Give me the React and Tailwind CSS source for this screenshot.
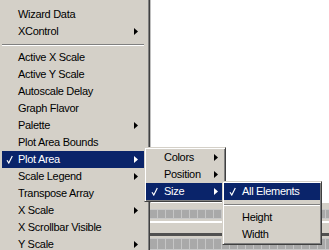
import clsx from "clsx";

const mainItems = [
    { label: "Wizard Data" },
    { label: "XControl", sub: true },
    { sep: true },
    { label: "Active X Scale" },
    { label: "Active Y Scale" },
    { label: "Autoscale Delay" },
    { label: "Graph Flavor" },
    { label: "Palette", sub: true },
    { label: "Plot Area Bounds" },
    { label: "Plot Area", sub: true, checked: true, active: true },
    { label: "Scale Legend", sub: true },
    { label: "Transpose Array" },
    { label: "X Scale", sub: true },
    { label: "X Scrollbar Visible" },
    { label: "Y Scale", sub: true },
];

const plotAreaItems = [
    { label: "Colors", sub: true },
    { label: "Position", sub: true },
    { label: "Size", sub: true, checked: true, active: true },
];

const sizeItems = [
    { label: "All Elements", checked: true, active: true },
    { sep: true },
    { label: "Height" },
    { label: "Width" },
];

function Check({ active }) {
    return (
        <svg width="7" height="9" viewBox="0 0 7 9" className="block">
            <path d="M1 5.2 L2.8 8 L6.3 1" fill="none" stroke={active ? "#fff" : "#000"} strokeWidth="1.2" />
        </svg>
    );
}

function Arrow({ active }) {
    return (
        <svg width="4" height="7" viewBox="0 0 4 7" className="block">
            <polygon points="0,0 4,3.5 0,7" fill={active ? "#fff" : "#000"} />
        </svg>
    );
}

function MenuRow({ item, slot, checkPad }) {
    if (item.sep) {
        return (
            <div className="flex h-[9px] flex-col justify-center">
                <div className="h-[2px] border-t border-b border-t-[#808080] border-b-white" />
            </div>
        );
    }
    return (
        <div
            className={clsx(
                "flex h-[17px] items-center whitespace-nowrap",
                item.active ? "bg-[#0a246a] text-white" : "text-black"
            )}
        >
            <span className={clsx("flex shrink-0", slot, checkPad)}>
                {item.checked && <Check active={item.active} />}
            </span>
            <span className="leading-[17px]">{item.label}</span>
            {item.sub && (
                <span className="ml-auto mr-[6px]">
                    <Arrow active={item.active} />
                </span>
            )}
        </div>
    );
}

function Popup({ className, items }) {
    return (
        <div
            className={clsx(
                "absolute border border-t-[#d4d0c8] border-l-[#d4d0c8] border-r-[#404040] border-b-[#404040] bg-[#d4d0c8] p-[1px] shadow-[inset_1px_1px_0_#ffffff,inset_-1px_-1px_0_#808080]",
                className
            )}
        >
            {items.map((item, i) => (
                <MenuRow key={i} item={item} slot="w-[18px]" checkPad="pl-[5px]" />
            ))}
        </div>
    );
}

function Grid() {
    return (
        <div className="border-y border-y-[#c8c8c8] bg-[repeating-linear-gradient(90deg,#a9a9a9_0_7px,#c6c6c6_7px_8px)]" />
    );
}

export default function App() {
    return (
        <div className="relative h-[250px] w-[329px] overflow-hidden bg-white font-['Liberation_Sans',Arial,sans-serif] text-[11px] tracking-[-0.3px]">
            {/* panel behind the menus */}
            <div className="flex h-full flex-col">
                <div className="ml-[150px] flex-1 border-l border-l-[#c0c0c0]" />
                <div className="ml-[150px] flex h-[47px] flex-col bg-[#d4d0c8]">
                    <div className="h-[6px]" />
                    <div className="flex h-[10px] flex-col">
                        <div className="flex-1 border-y border-y-[#c8c8c8] bg-[repeating-linear-gradient(90deg,#a9a9a9_0_7px,#c6c6c6_7px_8px)]" />
                    </div>
                    <div className="h-[2px]" />
                    <div className="h-[2px] bg-white" />
                    <div className="h-[10px]" />
                    <div className="h-[3px] bg-[#505050]" />
                    <div className="h-[2px]" />
                    <div className="flex-1 border-y border-y-[#c8c8c8] bg-[repeating-linear-gradient(90deg,#a9a9a9_0_7px,#c6c6c6_7px_8px)]" />
                </div>
            </div>

            {/* main context menu */}
            <div className="absolute left-0 top-0 h-full w-[150px] border-r border-r-[#404040] bg-[#d4d0c8] pl-[2px] pr-[5px] pt-[6px] shadow-[inset_-1px_0_0_#808080]">
                {mainItems.map((item, i) => (
                    <MenuRow key={i} item={item} slot="w-[16px]" checkPad="pl-[4px]" />
                ))}
            </div>

            <Popup className="left-[144px] top-[147px] w-[82px]" items={plotAreaItems} />
            <Popup className="left-[222px] top-[181px] w-[100px]" items={sizeItems} />
        </div>
    );
}
